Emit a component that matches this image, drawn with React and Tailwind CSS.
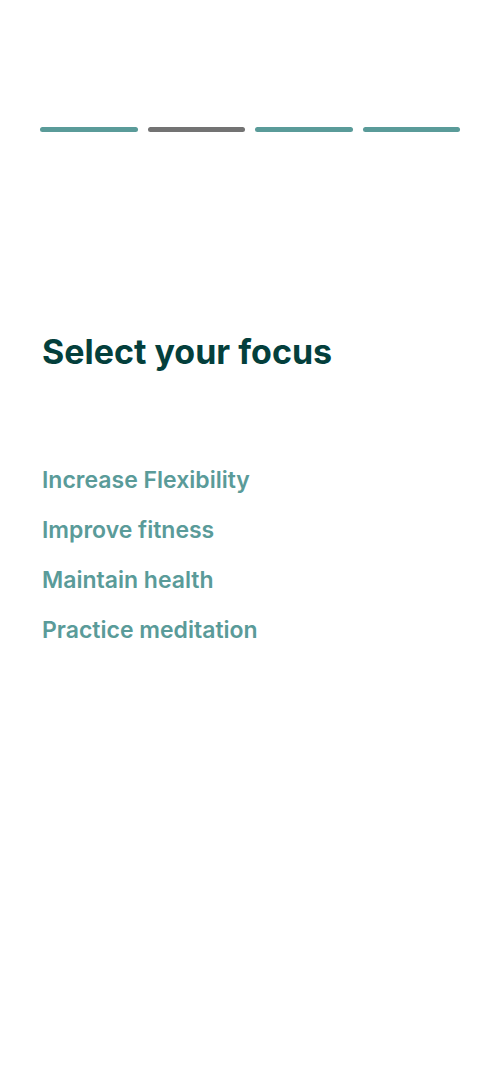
import React from 'react';

const steps = ['done', 'current', 'done', 'done'];
const options = ['Increase Flexibility', 'Improve fitness', 'Maintain health', 'Practice meditation'];

export default function App() {
  return (
    <div className="min-h-[1080px] w-full bg-white font-['Inter',sans-serif]">
      {/* progress */}
      <div className="flex gap-[10px] pl-[40px] pr-[38px] pt-[127px]">
        {steps.map((s, i) => (
          <div
            key={i}
            className={`h-[5px] flex-1 rounded-full ${s === 'current' ? 'bg-[#737373]' : 'bg-[#5a9b99]'}`}
          />
        ))}
      </div>

      <h1 className="mt-[198px] pl-[42px] text-[34px] font-bold leading-[44px] text-[#043f3c]">
        Select your focus
      </h1>

      <div className="mt-[81px] flex flex-col pl-[42px]">
        {options.map((o) => (
          <button
            key={o}
            className="h-[50px] text-left text-[23px] font-semibold text-[#5a9b99]"
          >
            {o}
          </button>
        ))}
      </div>
    </div>
  );
}
